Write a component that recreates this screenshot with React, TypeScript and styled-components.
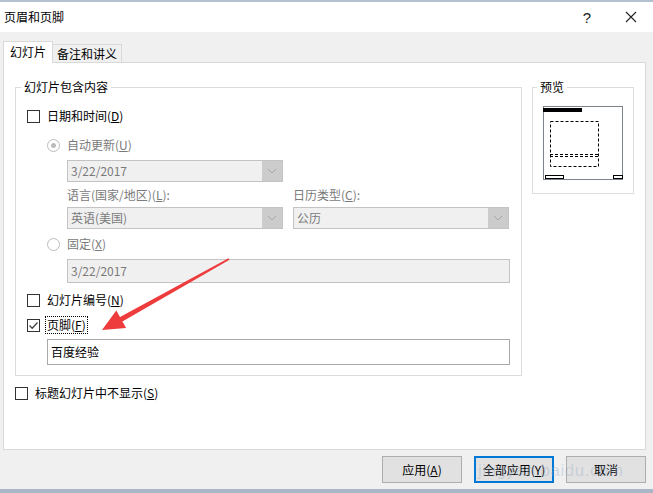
import React from 'react'
import styled, { createGlobalStyle } from 'styled-components'

const GlobalStyle = createGlobalStyle`
  html, body { margin: 0; padding: 0; }
  body {
    font-family: 'Microsoft YaHei', 'Noto Sans CJK SC', 'Noto Sans', sans-serif;
    font-size: 12px;
    color: #000;
  }
  * { box-sizing: border-box; }
`

const colors = {
    border: '#d9d9d9',
    groupBorder: '#dcdcdc',
    disabledText: '#7a7a7a',
    disabledFill: '#f0f0f0',
    disabledBorder: '#c3c3c3',
    dropButton: '#cccccc',
    face: '#f0f0f0',
}

const Window = styled.div`
    position: relative;
    width: 653px;
    height: 493px;
    border-top: 2px solid #b3c0cf;
    border-bottom: 4px solid #a9b6c6;
    display: flex;
    flex-direction: column;
    background: ${colors.face};
    overflow: hidden;
`

const TitleBar = styled.div`
    height: 30px;
    flex: none;
    background: #fff;
    display: flex;
    align-items: center;
    padding-left: 4px;
`

const TitleText = styled.div`
    flex: 1;
    line-height: 16px;
`

const CaptionButton = styled.div`
    width: 44px;
    height: 30px;
    display: flex;
    align-items: center;
    justify-content: center;
    font-family: 'Liberation Sans', sans-serif;
    font-size: 15px;
    color: #222;
`

const Body = styled.div`
    flex: 1;
    display: flex;
    flex-direction: column;
    padding: 9px 7px 0 3px;
`

const TabRow = styled.div`
    height: 21px;
    display: flex;
    align-items: flex-end;
    position: relative;
    z-index: 1;
`

const Tab = styled.div<{ $active?: boolean; $width: number }>`
    width: ${(p) => p.$width}px;
    height: ${(p) => (p.$active ? 22 : 18)}px;
    margin-bottom: ${(p) => (p.$active ? -1 : 0)}px;
    background: ${(p) => (p.$active ? '#fff' : colors.face)};
    border: 1px solid ${colors.border};
    border-bottom: none;
    ${(p) => (p.$active ? '' : 'border-left: none;')}
    display: flex;
    align-items: center;
    justify-content: center;
    line-height: 16px;
    padding-bottom: ${(p) => (p.$active ? 1 : 0)}px;
`

const Panel = styled.div`
    height: 388px;
    background: #fff;
    border: 1px solid ${colors.border};
    padding: 16px 10px 0 11px;
    display: grid;
    grid-template-columns: 507px 102px;
    column-gap: 10px;
    align-items: start;
    align-content: start;
`

const GroupBox = styled.fieldset`
    margin: 0;
    padding: 0;
    min-width: 0;
    border: 1px solid ${colors.groupBorder};
`

const Legend = styled.legend<{ $offset: number }>`
    margin-left: ${(p) => p.$offset}px;
    padding: 0 3px;
    line-height: 16px;
    font-size: 12px;
`

const GroupContent = styled.div`
    padding: 13px 11px 10px 11px;
    display: flex;
    flex-direction: column;
`

const PreviewContent = styled.div`
    padding: 11px 10px 10px 10px;
`

const Row = styled.div<{ $top?: number; $indent?: number }>`
    display: flex;
    align-items: center;
    height: 16px;
    margin-top: ${(p) => p.$top ?? 0}px;
    margin-left: ${(p) => p.$indent ?? 0}px;
`

const FullRow = styled(Row)`
    grid-column: 1 / -1;
`

const Box = styled.span`
    width: 13px;
    height: 13px;
    border: 1px solid #333;
    background: #fff;
    display: inline-flex;
    align-items: center;
    justify-content: center;
    flex: none;
`

const Radio = styled.span`
    width: 13px;
    height: 13px;
    border-radius: 50%;
    border: 1px solid #bcbcbc;
    background: #fff;
    display: inline-flex;
    align-items: center;
    justify-content: center;
    flex: none;
`

const RadioDot = styled.span`
    width: 5px;
    height: 5px;
    border-radius: 50%;
    background: #bcbcbc;
`

const Label = styled.span<{ $disabled?: boolean; $focused?: boolean }>`
    margin-left: ${(p) => (p.$focused ? 5 : 7)}px;
    line-height: 16px;
    color: ${(p) => (p.$disabled ? colors.disabledText : '#000')};
    ${(p) => (p.$focused ? 'border: 1px dotted #000; padding: 0 1px;' : '')}
`

const FieldLabel = styled.div`
    line-height: 16px;
    height: 16px;
    color: ${colors.disabledText};
`

const Pair = styled.div<{ $top: number }>`
    display: grid;
    grid-template-columns: 216px 216px;
    column-gap: 10px;
    margin-left: 40px;
    margin-top: ${(p) => p.$top}px;
`

const Combo = styled.div<{ $width?: number }>`
    width: ${(p) => (p.$width ? `${p.$width}px` : 'auto')};
    height: 22px;
    border: 1px solid ${colors.disabledBorder};
    background: ${colors.disabledFill};
    display: flex;
    align-items: center;
    color: ${colors.disabledText};
    padding-left: 3px;
`

const ComboText = styled.span`
    flex: 1;
    line-height: 16px;
`

const DropButton = styled.span`
    width: 20px;
    height: 20px;
    background: ${colors.dropButton};
    display: flex;
    align-items: center;
    justify-content: center;
`

const TextBox = styled.div<{ $width: number; $height: number; $indent: number; $top: number; $disabled?: boolean }>`
    width: ${(p) => p.$width}px;
    height: ${(p) => p.$height}px;
    margin-left: ${(p) => p.$indent}px;
    margin-top: ${(p) => p.$top}px;
    border: 1px solid ${(p) => (p.$disabled ? colors.disabledBorder : '#a9a9a9')};
    background: ${(p) => (p.$disabled ? colors.disabledFill : '#fff')};
    color: ${(p) => (p.$disabled ? colors.disabledText : '#000')};
    display: flex;
    align-items: center;
    padding-left: 3px;
    line-height: 16px;
`

const Footer = styled.div`
    margin-top: 6px;
    display: flex;
    justify-content: flex-end;
    gap: 12px;
`

const Button = styled.div<{ $focused?: boolean }>`
    width: 80px;
    height: 27px;
    background: #e1e1e1;
    border: ${(p) => (p.$focused ? '2px solid #0078d7' : '1px solid #adadad')};
    display: flex;
    align-items: center;
    justify-content: center;
    line-height: 16px;
`

const Overlay = styled.svg`
    position: absolute;
    left: 0;
    top: -2px;
    pointer-events: none;
`

const Watermark = styled.div`
    position: absolute;
    left: 478px;
    top: 459px;
    font-family: 'Liberation Sans', sans-serif;
    font-size: 17px;
    letter-spacing: 0.5px;
    color: rgba(150, 168, 196, 0.35);
    pointer-events: none;
`

const Chevron = () => (
    <svg width="10" height="6" viewBox="0 0 10 6">
        <path d="M1 1 L5 5 L9 1" fill="none" stroke="#a6a6a6" strokeWidth="1" />
    </svg>
)

const Check = () => (
    <svg width="11" height="11" viewBox="0 0 11 11">
        <path d="M1.5 5.5 L4.2 8.2 L9.5 2.5" fill="none" stroke="#444" strokeWidth="1.3" />
    </svg>
)

const Checkbox = ({ checked }: { checked?: boolean }) => <Box>{checked && <Check />}</Box>

const RadioButton = ({ checked }: { checked?: boolean }) => <Radio>{checked && <RadioDot />}</Radio>

const DropDown = ({ value, width }: { value: string; width?: number }) => (
    <Combo $width={width}>
        <ComboText>{value}</ComboText>
        <DropButton>
            <Chevron />
        </DropButton>
    </Combo>
)

const Preview = () => (
    <svg width="80" height="74" viewBox="0 0 80 74">
        <rect x="0.5" y="0.5" width="79" height="73" fill="#fff" stroke="#7d838b" />
        <rect x="0" y="2" width="39" height="4" fill="#000" />
        <g fill="none" stroke="#000" strokeWidth="1" strokeDasharray="3 2">
            <rect x="7.5" y="15.5" width="48" height="45" />
            <line x1="7" y1="48.5" x2="56" y2="48.5" />
            <line x1="7" y1="50.5" x2="56" y2="50.5" />
        </g>
        <rect x="2.5" y="69.5" width="18" height="3" fill="#fff" stroke="#000" />
        <rect x="70.5" y="69.5" width="9" height="3" fill="#fff" stroke="#000" />
    </svg>
)

const Arrow = () => (
    <Overlay width="653" height="493" viewBox="0 0 653 493">
        <polygon
            points="228.5,258.2 120.0,317.1 116.3,310.6 102,330 126.1,328.0 122.4,321.5 229.5,259.8"
            fill="#ee3b3b"
        />
    </Overlay>
)

const App = (): JSX.Element => (
    <>
        <GlobalStyle />
        <Window>
            <TitleBar>
                <TitleText>页眉和页脚</TitleText>
                <CaptionButton>?</CaptionButton>
                <CaptionButton>
                    <svg width="12" height="12" viewBox="0 0 12 12">
                        <path d="M1 1 L11 11 M11 1 L1 11" stroke="#222" strokeWidth="1.1" />
                    </svg>
                </CaptionButton>
            </TitleBar>
            <Body>
                <TabRow>
                    <Tab $active $width={50}>幻灯片</Tab>
                    <Tab $width={69}>备注和讲义</Tab>
                </TabRow>
                <Panel>
                    <GroupBox>
                        <Legend $offset={5}>幻灯片包含内容</Legend>
                        <GroupContent>
                            <Row>
                                <Checkbox />
                                <Label>
                                    日期和时间(<u>D</u>)
                                </Label>
                            </Row>
                            <Row $top={13} $indent={20}>
                                <RadioButton checked />
                                <Label $disabled>
                                    自动更新(<u>U</u>)
                                </Label>
                            </Row>
                            <Pair $top={7}>
                                <DropDown value="3/22/2017" />
                            </Pair>
                            <Pair $top={5}>
                                <FieldLabel>
                                    语言(国家/地区)(<u>L</u>):
                                </FieldLabel>
                                <FieldLabel>
                                    日历类型(<u>C</u>):
                                </FieldLabel>
                            </Pair>
                            <Pair $top={4}>
                                <DropDown value="英语(美国)" />
                                <DropDown value="公历" />
                            </Pair>
                            <Row $top={7} $indent={20}>
                                <RadioButton />
                                <Label $disabled>
                                    固定(<u>X</u>)
                                </Label>
                            </Row>
                            <TextBox $width={443} $height={24} $indent={40} $top={7} $disabled>
                                3/22/2017
                            </TextBox>
                            <Row $top={9}>
                                <Checkbox />
                                <Label>
                                    幻灯片编号(<u>N</u>)
                                </Label>
                            </Row>
                            <Row $top={9}>
                                <Checkbox checked />
                                <Label $focused>
                                    页脚(<u>F</u>)
                                </Label>
                            </Row>
                            <TextBox $width={463} $height={26} $indent={20} $top={6}>
                                百度经验
                            </TextBox>
                        </GroupContent>
                    </GroupBox>
                    <GroupBox>
                        <Legend $offset={4}>预览</Legend>
                        <PreviewContent>
                            <Preview />
                        </PreviewContent>
                    </GroupBox>
                    <FullRow $top={9}>
                        <Checkbox />
                        <Label>
                            标题幻灯片中不显示(<u>S</u>)
                        </Label>
                    </FullRow>
                </Panel>
                <Footer>
                    <Button>
                        应用(<u>A</u>)
                    </Button>
                    <Button $focused>
                        全部应用(<u>Y</u>)
                    </Button>
                    <Button>取消</Button>
                </Footer>
            </Body>
            <Watermark>jingyan.baidu.com</Watermark>
            <Arrow />
        </Window>
    </>
)

export default App
